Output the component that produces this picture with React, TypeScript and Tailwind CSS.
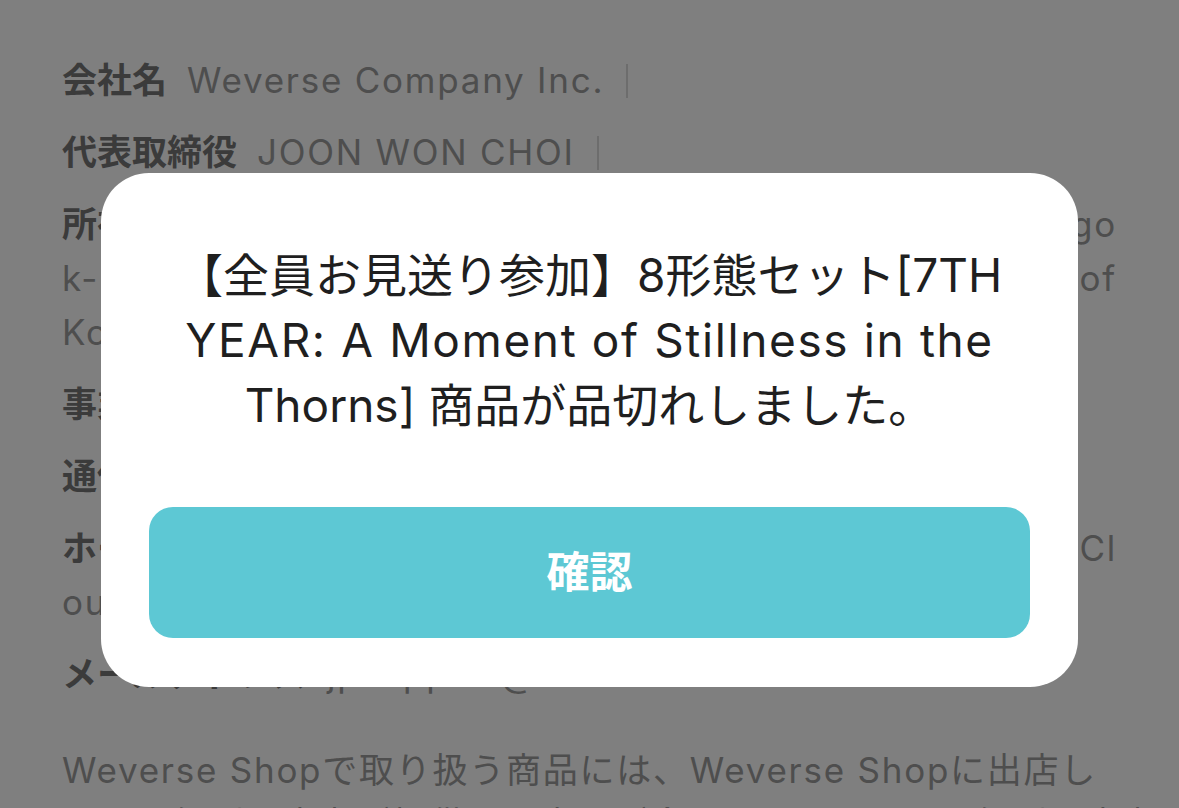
import React from "react";

const bodyFont = { fontFamily: "Inter, 'Noto Sans CJK JP', sans-serif" };

function Sep() {
  return <span className="inline-block w-[2px] h-[34px] bg-[#dadada] ml-[22px] align-[-5px]" />;
}

function Label({ children }: { children: React.ReactNode }) {
  return <b className="font-bold text-[#777] mr-[20px] tracking-normal">{children}</b>;
}

function Line({ left, right }: { left: React.ReactNode; right?: React.ReactNode }) {
  return (
    <div className="flex justify-between whitespace-nowrap">
      <span>{left}</span>
      {right && <span>{right}</span>}
    </div>
  );
}

function CompanyInfo() {
  return (
    <div className="min-h-[808px] bg-white px-[62px] pt-[53px] text-[35px] leading-[54px] tracking-[0.05em] text-[#9c9c9c]" style={bodyFont}>
      <div className="flex flex-col gap-[18px]">
        <div className="whitespace-nowrap">
          <Label>会社名</Label>Weverse Company Inc.<Sep />
        </div>
        <div className="whitespace-nowrap">
          <Label>代表取締役</Label>JOON WON CHOI<Sep />
        </div>
        <div>
          <Line left={<><Label>所在地</Label>42, Hangang-daero,</>} right="Yongsan-go" />
          <Line left="k-myeon," right="Republic of" />
          <Line left="Korea" />
        </div>
        <div>
          <Line left={<><Label>事業者登録番号</Label>220-88-38020</>} />
        </div>
        <div>
          <Line left={<><Label>通信販売業申告番号</Label>2020-Seoul-0000</>} />
        </div>
        <div>
          <Line left={<><Label>ホームページ</Label>shop.weverse.io</>} right="Cl" />
          <Line left="oud Shop" />
        </div>
        <div className="whitespace-nowrap">
          <Label>メールアドレス</Label>jpsupport@weverse.io
        </div>
      </div>
      <p className="mt-[42px] whitespace-nowrap">
        Weverse Shopで取り扱う商品には、Weverse Shopに出店し
        <br />
        ている個別販売者が提供する商品が含まれております。個別販売者
      </p>
    </div>
  );
}

export default function App() {
  return (
    <div className="relative h-[808px] overflow-hidden">
      <CompanyInfo />
      <div className="fixed inset-0 bg-black/50">
        <div className="mx-auto mt-[173px] w-[977px] rounded-[48px] bg-white px-[48px] pt-[70px] pb-[49px]" style={bodyFont}>
          <p className="text-center text-[46px] leading-[65px] text-[#1f1f1f]">
            【全員お見送り参加】8形態セット[7TH
            <br />
            <span className="tracking-[0.035em]">YEAR: A Moment of Stillness in the</span>
            <br />
            Thorns] 商品が品切れしました。
          </p>
          <button className="mt-[69px] flex h-[131px] w-full items-center justify-center rounded-[24px] bg-[#5dc8d4] text-[43px] font-bold text-white">
            確認
          </button>
        </div>
      </div>
    </div>
  );
}
